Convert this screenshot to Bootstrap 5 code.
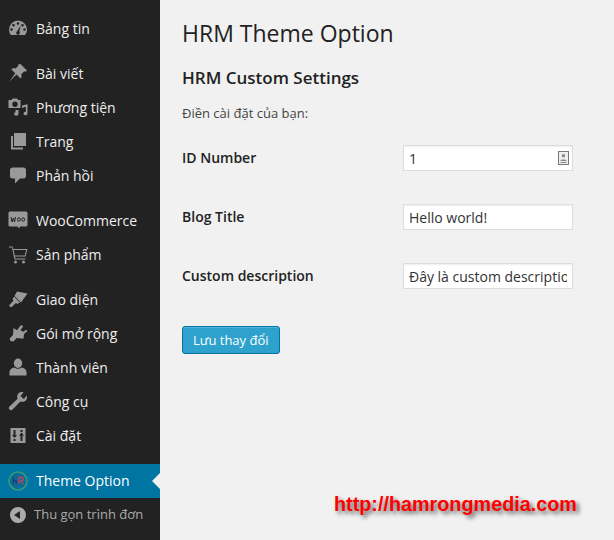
<!DOCTYPE html>
<html lang="vi">
<head>
    <meta charset="UTF-8">
    <meta name="viewport" content="width=device-width, initial-scale=1.0">
    <title>HRM Theme Option</title>
    <link href="https://cdn.jsdelivr.net/npm/bootstrap@5.3.0/dist/css/bootstrap.min.css" rel="stylesheet">
    <style>
        body {
            margin: 0;
            width: 614px;
            height: 540px;
            overflow: hidden;
            font-family: "Open Sans", "Noto Sans", sans-serif;
            font-size: 14px;
            color: #444;
            background-color: #f1f1f1;
        }

        /* sidebar */
        .wp-side {
            width: 160px;
            height: 540px;
            flex: none;
            padding-top: 11px;
            background-color: #222;
        }

        .wp-item {
            height: 34px;
            padding-left: 8px;
            color: #eee;
            text-decoration: none;
            position: relative;
        }

        .wp-item svg {
            width: 20px;
            height: 20px;
            flex: none;
            fill: #999;
            margin-right: 8px;
        }

        .wp-item.gap-after { margin-bottom: 11px; }
        .wp-item.gap-after-l { margin-bottom: 11px; }
        .wp-item.gap-after-xl { margin-bottom: 12px; }

        .wp-item.active-item {
            padding-bottom: 1px;
            background-color: #0074a2;
            color: #fff;
        }

        .wp-item.active-item::after {
            content: "";
            position: absolute;
            right: 0;
            top: 9px;
            border: 8px solid transparent;
            border-left-width: 0;
            border-right-color: #f1f1f1;
        }

        .wp-item.collapse-item {
            color: #aaa;
            font-size: 13px;
        }

        .wp-item.collapse-item svg {
            fill: #aaa;
            margin-right: 6px;
        }

        /* main */
        .wp-main {
            position: relative;
            flex: 1;
            padding: 19px 0 0 22px;
        }

        .wp-title {
            margin: 0;
            font-size: 23px;
            line-height: 29px;
            font-weight: 400;
            color: #222;
        }

        .wp-subtitle {
            margin: 19px 0 0;
            font-size: 17px;
            line-height: 22px;
            font-weight: 600;
            color: #222;
        }

        .wp-intro {
            margin: 15px 0 0;
            font-size: 13px;
            line-height: 18px;
        }

        .wp-row {
            height: 26px;
            margin-bottom: 33px;
        }

        .wp-form { padding-top: 23px; }

        .wp-label {
            width: 221px;
            flex: none;
            margin: 0;
            padding-bottom: 2px;
            font-weight: 600;
            color: #222;
        }

        .wp-field {
            position: relative;
            width: 170px;
        }

        .wp-input {
            display: block;
            width: 170px;
            height: 26px;
            padding: 0 5px;
            border: 1px solid #ddd;
            border-radius: 0;
            outline: 0;
            font-family: inherit;
            font-size: 14px;
            color: #333;
            background-color: #fff;
            box-shadow: inset 0 1px 2px rgba(0, 0, 0, .07);
        }

        .wp-card-icon {
            position: absolute;
            right: 4px;
            top: 6px;
            width: 11px;
            height: 14px;
        }

        .wp-save {
            height: 28px;
            margin-top: 4px;
            padding: 0 10px 1px;
            font-size: 13px;
            line-height: 26px;
            color: #fff;
            background-color: #2ea2cc;
            border: 1px solid #0074a2;
            border-radius: 3px;
            box-shadow: inset 0 1px 0 rgba(120, 200, 230, .5);
        }

        .wp-mark {
            position: absolute;
            left: 174px;
            top: 491px;
            font-family: "Liberation Sans", Arial, sans-serif;
            font-size: 19.8px;
            line-height: 26px;
            font-weight: 700;
            white-space: nowrap;
            color: #f00;
            text-shadow: 3px 3px 4px rgba(0, 0, 0, .6);
        }
    </style>
</head>
<body>
    <div class="d-flex">
        <div class="wp-side">
            <a class="wp-item gap-after d-flex align-items-center" href="#">
                <svg viewBox="0 0 20 20"><path fill-rule="evenodd" d="M10 2.500a9 9 0 0 0-9 9c0 2.200.8 4.200 2 5.600h14c1.200-1.400 2-3.400 2-5.600a9 9 0 0 0-9-9zM10 4.200a1.300 1.300 0 1 1 0 2.600 1.300 1.300 0 0 1 0-2.600zM5.500 6a1.300 1.300 0 1 1 0 2.600 1.300 1.300 0 0 1 0-2.600zM14.500 6a1.300 1.300 0 1 1 0 2.600 1.300 1.300 0 0 1 0-2.600zM3.500 10.200a1.300 1.300 0 1 1 0 2.600 1.300 1.300 0 0 1 0-2.600zM16.500 10.200a1.300 1.300 0 1 1 0 2.600 1.300 1.300 0 0 1 0-2.600zM12.800 7.500l-1.500 6.100a1.800 1.800 0 1 1-2.200-.3z"/></svg>
                <span>Bảng tin</span>
            </a>
            <a class="wp-item d-flex align-items-center" href="#">
                <svg viewBox="0 0 20 20"><path d="M12.500 1l6.500 6.500-1.500 1.300-1.200-.6-3 3c.6 1.700.3 3.300-.7 4.300L8.500 11.500l-7 7 5.700-8.200L3.200 6.300c1-1 2.700-1.300 4.300-.7l3-3-.6-1.200z"/></svg>
                <span>Bài viết</span>
            </a>
            <a class="wp-item d-flex align-items-center" href="#">
                <svg viewBox="0 0 20 20"><path fill-rule="evenodd" d="M4.500 1.500h4.500l1 1.500h2.500v8H.5V3H3.500zM7 4.500a2.700 2.700 0 1 0 0 5.400 2.700 2.700 0 0 0 0-5.400z"/><path d="M14 8.500l5.500-1.200v9.200a2 1.800 0 1 1-1.600-1.700V9.800l-2.300.5v.5h-1.600zM7.500 13h3v3.800a2.200 1.900 0 1 1-2-1.800V15h-1z"/></svg>
                <span>Phương tiện</span>
            </a>
            <a class="wp-item d-flex align-items-center" href="#">
                <svg viewBox="0 0 20 20"><path d="M6 2h12v13H6z"/><path d="M3 5h2v11.500h10V18.500H3z"/></svg>
                <span>Trang</span>
            </a>
            <a class="wp-item gap-after-l d-flex align-items-center" href="#">
                <svg viewBox="0 0 20 20"><path d="M4.500 2.500h11c1.400 0 2.500 1.100 2.500 2.500v6c0 1.400-1.100 2.500-2.500 2.500H12l-5 5v-5H4.500A2.500 2.500 0 0 1 2 11V5c0-1.400 1.100-2.500 2.500-2.500z"/></svg>
                <span>Phản hồi</span>
            </a>
            <a class="wp-item d-flex align-items-center" href="#">
                <svg viewBox="0 0 20 20"><path d="M2 1.500h16c.8 0 1.500.7 1.500 1.500v12c0 .8-.7 1.500-1.500 1.500h-6l-1 2-1.500-2H2A1.500 1.500 0 0 1 .5 15V3c0-.8.700-1.500 1.500-1.500z"/><path d="M3 7l1 5 1.500-4 1 4 1-5M9.500 9.500a1.400 1.700 0 1 0 2.800 0 1.400 1.700 0 1 0-2.800 0M13.800 9.500a1.400 1.700 0 1 0 2.800 0 1.400 1.700 0 1 0-2.800 0" fill="none" stroke="#222" stroke-width="1"/></svg>
                <span>WooCommerce</span>
            </a>
            <a class="wp-item gap-after-l d-flex align-items-center" href="#">
                <svg viewBox="0 0 20 20"><path d="M1 2.500h3.500l.8 2.500H19.500l-2 7.500H7l.4 2H17.500v1H6.500L4 3.500H1zM5.600 6l1.200 5.500h9.900L18.100 6z"/><circle cx="7.500" cy="18" r="1.500"/><circle cx="15.500" cy="18" r="1.500"/></svg>
                <span>Sản phẩm</span>
            </a>
            <a class="wp-item d-flex align-items-center" href="#">
                <svg viewBox="0 0 20 20"><path d="M9 2.500l10.500 2-6.500 9-6.500-6.500zM6 7.500l6 6-2.800 1.500-1.200-1-5 4.500-2-2 4.500-5-1-1.200z"/></svg>
                <span>Giao diện</span>
            </a>
            <a class="wp-item d-flex align-items-center" href="#">
                <svg viewBox="0 0 20 20"><path d="M13 2l2.200 1.200-2.800 4 3 1.500 3-2.200.9 1.800-3.300 2.800-.5 4.700-6.800-.8-3.200 3.500-3-.5L1.500 15.500 5 12l.5-7 3.500 2.300z"/></svg>
                <span>Gói mở rộng</span>
            </a>
            <a class="wp-item d-flex align-items-center" href="#">
                <svg viewBox="0 0 20 20"><path d="M10 1.500a4.200 4.700 0 1 1 0 9.400 4.200 4.700 0 0 1 0-9.400zM6.500 10.500c1 .8 2.200 1.200 3.500 1.200s2.500-.4 3.500-1.200c2.800.5 5 2 5 4.500v3.500H1.500V15c0-2.500 2.200-4 5-4.500z"/></svg>
                <span>Thành viên</span>
            </a>
            <a class="wp-item d-flex align-items-center" href="#">
                <svg viewBox="0 0 20 20"><path d="M14 1c-2.700 0-4.800 2.100-4.800 4.800 0 .7.100 1.300.4 1.900L1.500 15.500c-.9.900-.9 2.200 0 3.100.9.900 2.200.9 3.100 0l7.800-8.100c.6.300 1.200.4 1.900.4 2.700 0 4.700-2.100 4.700-4.700 0-.6-.1-1.100-.3-1.700L15.800 8l-3.300-3L15.500 1.300C15 1.100 14.500 1 14 1z"/></svg>
                <span>Công cụ</span>
            </a>
            <a class="wp-item gap-after-xl d-flex align-items-center" href="#">
                <svg viewBox="0 0 20 20"><path fill-rule="evenodd" d="M2.500 3h15v15h-15zM5.500 5v5H4l2.500 3 2.500-3H7.500V5zM5.500 14v2h2v-2zM12.500 5v2h2V5zM13.500 7.500L11 10.500h1.500V16h2v-5.500H16z"/></svg>
                <span>Cài đặt</span>
            </a>
            <a class="wp-item active-item d-flex align-items-center" href="#">
                <svg viewBox="0 0 20 20"><circle cx="10" cy="10" r="9" fill="none" stroke="#3d9a78" stroke-width="1.500"/><circle cx="10" cy="10" r="7.500" fill="#0d6a96"/><path d="M5.500 6v7M5.500 10h3v3" fill="none" stroke="#1c3f7a" stroke-width="1.300"/><path d="M11 13V6.500h2.500a1.800 1.800 0 0 1 0 3.600H11M13 10l2 3" fill="none" stroke="#c0455a" stroke-width="1.300"/></svg>
                <span>Theme Option</span>
            </a>
            <a class="wp-item collapse-item d-flex align-items-center" href="#">
                <svg viewBox="0 0 20 20"><path fill-rule="evenodd" d="M10 2a8 8 0 1 1 0 16 8 8 0 0 1 0-16zM12 6l-6 4 6 4z"/></svg>
                <span>Thu gọn trình đơn</span>
            </a>
        </div>

        <div class="wp-main">
            <h2 class="wp-title">HRM Theme Option</h2>
            <h3 class="wp-subtitle">HRM Custom Settings</h3>
            <p class="wp-intro">Điền cài đặt của bạn:</p>
            <form class="wp-form" onsubmit="return false">
                <div class="wp-row d-flex align-items-center">
                    <label class="wp-label" for="idNumber">ID Number</label>
                    <div class="wp-field">
                        <input id="idNumber" class="wp-input" type="text" value="1">
                        <svg class="wp-card-icon" viewBox="0 0 11 14"><rect x=".5" y=".5" width="10" height="13" fill="#eee" stroke="#777"/><circle cx="5.500" cy="4.800" r="1.700" fill="#888"/><path d="M2.500 9.500c0-1.500 6-1.500 6 0v.5h-6zM2.500 11h6v1h-6z" fill="#888"/></svg>
                    </div>
                </div>
                <div class="wp-row d-flex align-items-center">
                    <label class="wp-label" for="blogTitle">Blog Title</label>
                    <div class="wp-field">
                        <input id="blogTitle" class="wp-input" type="text" value="Hello world!">
                    </div>
                </div>
                <div class="wp-row d-flex align-items-center">
                    <label class="wp-label" for="customDesc">Custom description</label>
                    <div class="wp-field">
                        <input id="customDesc" class="wp-input" type="text" value="Đây là custom description">
                    </div>
                </div>
                <button class="wp-save" type="submit">Lưu thay đổi</button>
            </form>
            <div class="wp-mark">http://hamrongmedia.com</div>
        </div>
    </div>
    <script src="https://cdn.jsdelivr.net/npm/bootstrap@5.3.0/dist/js/bootstrap.bundle.min.js"></script>
</body>
</html>
